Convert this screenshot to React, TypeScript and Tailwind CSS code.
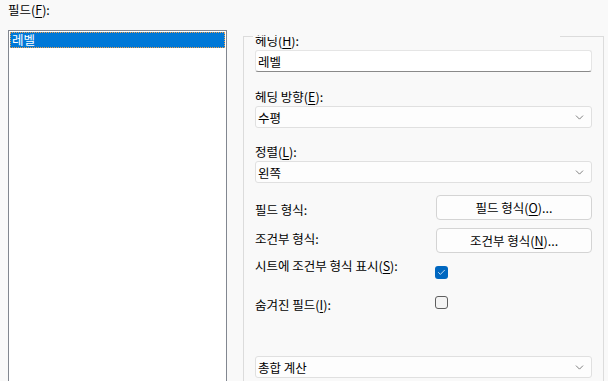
import { ChevronDown, Check } from "lucide-react";

const font = { fontFamily: '"Noto Sans CJK KR", "Noto Sans", sans-serif' };

function Mn({ children }: { children: string }) {
  return <span className="underline underline-offset-2">{children}</span>;
}

function Select({ value }: { value: string }) {
  return (
    <div className="flex items-center justify-between h-[22px] bg-[#fdfdfd] border border-[#e0e0e0] rounded-[3px] pl-[2px] pr-[5px]">
      <span className="leading-[15px]">{value}</span>
      <ChevronDown className="w-[13px] h-[13px] text-[#5a5a5a]" strokeWidth={1.4} />
    </div>
  );
}

function Button({ children }: { children: React.ReactNode }) {
  return (
    <div className="flex items-center justify-center w-[156px] h-[25px] bg-[#fdfdfd] border border-[#d4d4d4] rounded-[4px] leading-[15px]">
      {children}
    </div>
  );
}

export default function App() {
  return (
    <div
      className="w-[608px] h-[381px] overflow-hidden bg-[#f9f9f9] text-[12.5px] text-black pl-[8px] pt-[2px]"
      style={font}
    >
      <div className="leading-[15px]">
        필드(<Mn>F</Mn>):
      </div>
      <div className="flex items-start mt-[13px] gap-[16px]">
        {/* field list */}
        <div className="w-[219px] h-[400px] bg-white border border-[#828790] p-[1px]">
          <div className="h-[16px] bg-[#0078d7] border border-dotted border-[#f0a04c] text-white leading-[13px] pl-[1px]">
            레벨
          </div>
        </div>

        {/* group box */}
        <div className="relative w-[361px] h-[400px] mt-[6px] border border-[#dcdcdc] pl-[11px] pr-[11px]">
          <div className="absolute left-[9px] top-[-1px] w-[307px] h-[1px] bg-[#f9f9f9]" />
          <div className="leading-[15px] -mt-[4px]">
            헤딩(<Mn>H</Mn>):
          </div>
          <div className="mt-[2px] h-[22px] bg-white border border-[#e5e5e5] border-b-[#8a8a8a] rounded-[3px] pl-[2px] flex items-center">
            <span className="leading-[15px]">레벨</span>
          </div>

          <div className="leading-[15px] mt-[17px]">
            헤딩 방향(<Mn>E</Mn>):
          </div>
          <div className="mt-[2px]">
            <Select value="수평" />
          </div>

          <div className="leading-[15px] mt-[16px]">
            정렬(<Mn>L</Mn>):
          </div>
          <div className="mt-[2px]">
            <Select value="왼쪽" />
          </div>

          <div className="flex items-start mt-[12px]">
            <div className="w-[181px] leading-[15px] mt-[7px]">필드 형식:</div>
            <Button>
              필드 형식(<Mn>O</Mn>)...
            </Button>
          </div>

          <div className="flex items-start mt-[8px]">
            <div className="w-[181px] leading-[15px] mt-[3px]">조건부 형식:</div>
            <Button>
              조건부 형식(<Mn>N</Mn>)...
            </Button>
          </div>

          <div className="flex items-start mt-[5px]">
            <div className="w-[180px] leading-[15px]">
              시트에 조건부 형식 표시(<Mn>S</Mn>):
            </div>
            <div className="mt-[8px] w-[13px] h-[13px] rounded-[3px] bg-[#0067c0] flex items-center justify-center">
              <Check className="w-[9px] h-[9px] text-white" strokeWidth={2} />
            </div>
          </div>

          <div className="flex items-start mt-[17px]">
            <div className="w-[180px] leading-[15px] mt-[1px]">
              숨겨진 필드(<Mn>I</Mn>):
            </div>
            <div className="w-[13px] h-[13px] rounded-[3px] border border-[#5f5f5f] bg-[#f4f4f4]" />
          </div>

          <div className="mt-[44px]">
            <Select value="총합 계산" />
          </div>
        </div>
      </div>
    </div>
  );
}
